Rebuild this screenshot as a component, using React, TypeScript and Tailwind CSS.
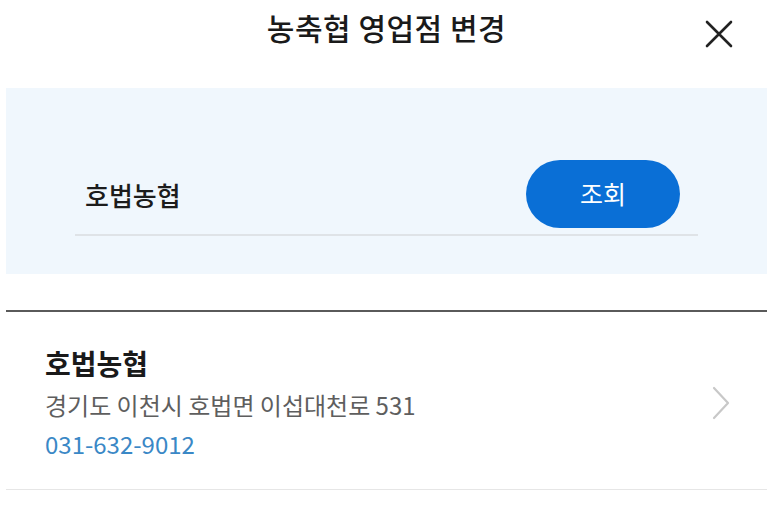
import React from "react";

export default function App() {
  return (
    <div
      className="w-[773px] h-[508px] bg-white overflow-hidden"
      style={{ fontFamily: '"Noto Sans CJK KR", "Noto Sans", sans-serif' }}
    >
      <div className="relative h-[88px] flex justify-center pt-[8px]">
        <h1 className="text-[30px] leading-[38px] font-medium text-[#1a1a1a] tracking-[0.5px]">농축협 영업점 변경</h1>
        <button className="absolute right-[38px] top-[18px] w-[32px] h-[32px] flex items-center justify-center">
          <svg width="30" height="30" viewBox="0 0 30 30" fill="none" stroke="#222" strokeWidth="2.6" strokeLinecap="round">
            <path d="M3 3L27 27M27 3L3 27" />
          </svg>
        </button>
      </div>
      <div className="mx-[6px] h-[186px] bg-[#f0f7fd] flex flex-col justify-end pb-[38px] px-[69px]">
        <div className="flex items-center justify-between border-b-2 border-[#dfe3e7] pb-[6px]">
          <span className="pl-[10px] text-[26px] font-medium text-[#1c1c1c]">호법농협</span>
          <button className="mr-[18px] w-[154px] h-[68px] rounded-full bg-[#0a6fd6] text-white text-[25px] flex items-center justify-center">
            조회
          </button>
        </div>
      </div>
      <div className="mx-[6px] mt-[36px] border-t-2 border-[#5a5a5a]" />
      <div className="mx-[6px] flex items-center justify-between pl-[39px] pr-[36px] pt-[33px] pb-[28px] border-b border-[#e6e6e6]">
        <div className="flex flex-col">
          <span className="text-[28px] leading-[36px] font-bold text-[#1a1a1a]">호법농협</span>
          <span className="mt-[2px] text-[24px] leading-[44px] text-[#5e5e5e]">경기도 이천시 호법면 이섭대천로 531</span>
          <span className="text-[24px] leading-[34px] text-[#3a88c6]">031-632-9012</span>
        </div>
        <svg width="20" height="36" viewBox="0 0 20 36" fill="none" stroke="#c8c8c8" strokeWidth="2.2" strokeLinecap="round" strokeLinejoin="round">
          <path d="M3 3L17 18L3 33" />
        </svg>
      </div>
    </div>
  );
}
